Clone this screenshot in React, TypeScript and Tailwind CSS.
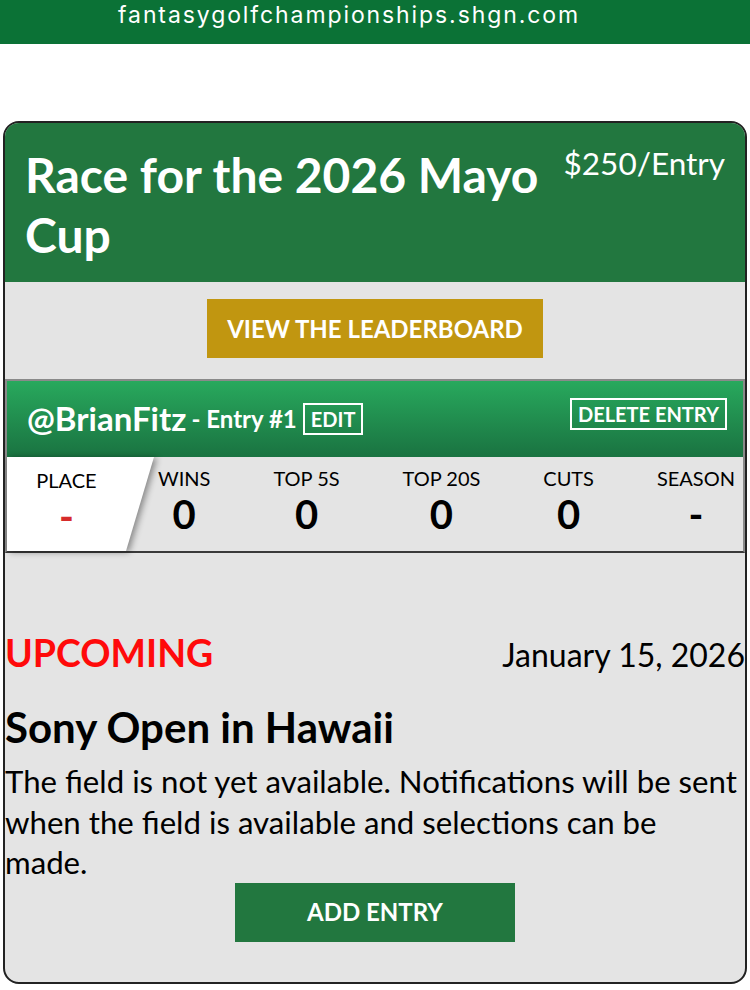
export default function App() {
  const stats = [
    { label: "WINS", value: "0" },
    { label: "TOP 5S", value: "0" },
    { label: "TOP 20S", value: "0" },
    { label: "CUTS", value: "0" },
    { label: "SEASON", value: "-" },
  ];
  return (
    <div className="min-h-[990px] bg-white font-[Lato,sans-serif] text-black">
      <div className="h-[44px] bg-[#0b7236] flex justify-center pr-[52px] text-white font-[Inter,sans-serif] text-[23px] tracking-[1.9px] leading-[30px]">
        fantasygolfchampionships.shgn.com
      </div>
      <div className="px-[3px] pt-[77px]">
        <div className="rounded-[16px] border-2 border-[#222] bg-[#e4e4e4] overflow-hidden">
          <div className="bg-[#22773f] h-[159px] flex pl-[20px] pr-[20px] pt-[22px]">
            <h1 className="flex-1 text-white font-bold text-[48px] leading-[60px]">
              Race for the 2026 Mayo Cup
            </h1>
            <div className="shrink-0 text-white text-[31.5px] leading-[36px] pt-0">$250/Entry</div>
          </div>
          <div className="h-[97px] flex justify-center pt-[17px]">
            <div className="w-[336px] h-[59px] bg-[#c19610] text-white font-bold text-[24px] flex items-center justify-center">
              VIEW THE LEADERBOARD
            </div>
          </div>
          <div className="border-2 border-[#8a8a8a] border-b-[#3a3a3a]">
            <div className="h-[76px] bg-linear-to-b from-[#28a95d] to-[#1a7341] flex justify-between pl-[20px] pr-[16px]">
              <div className="flex items-center text-white font-bold">
                <span className="text-[33px]">@BrianFitz</span>
                <span className="text-[24px] ml-[5px]">- Entry #1</span>
                <span className="ml-[6px] border-2 border-white h-[32px] px-[6px] text-[20px] leading-[28px]">EDIT</span>
              </div>
              <div className="self-start mt-[17px] border-2 border-white h-[32px] px-[6px] text-white font-bold text-[20px] leading-[28px]">
                DELETE ENTRY
              </div>
            </div>
            <div className="h-[94px] flex">
              <div className="relative w-[147px] shrink-0">
                <div className="absolute inset-0 drop-shadow-[3px_1px_3px_rgba(0,0,0,0.4)]">
                  <div className="w-full h-full bg-white [clip-path:polygon(0_0,100%_0,calc(100%-28px)_100%,0_100%)]" />
                </div>
                <div className="relative flex flex-col items-center pr-[28px] pt-[9px]">
                  <div className="text-[20px] leading-[28px]">PLACE</div>
                  <div className="text-[40px] leading-[44px] font-bold text-[#d62b2b]">-</div>
                </div>
              </div>
              <div className="flex-1 flex justify-between pl-[4px] pr-[8px] pt-[7px]">
                {stats.map((s) => (
                  <div key={s.label} className="flex flex-col items-center">
                    <div className="text-[20px] leading-[28px]">{s.label}</div>
                    <div className="text-[40px] leading-[44px] font-bold">{s.value}</div>
                  </div>
                ))}
              </div>
            </div>
          </div>
          <div className="pt-[78px] pb-[40px]">
            <div className="flex justify-between items-baseline">
              <div className="text-[#ff0a0a] font-bold text-[37.5px] leading-[44px]">UPCOMING</div>
              <div className="text-[32px] leading-[44px]">January 15, 2026</div>
            </div>
            <div className="mt-[28px] font-bold text-[42px] leading-[44px]">Sony Open in Hawaii</div>
            <p className="mt-[12px] text-[31.2px] leading-[40.5px]">
              The field is not yet available. Notifications will be sent when the field is available and selections can be made.
            </p>
            <div className="flex justify-center">
              <div className="w-[280px] h-[59px] bg-[#22773f] text-white font-bold text-[24px] flex items-center justify-center">
                ADD ENTRY
              </div>
            </div>
          </div>
        </div>
      </div>
    </div>
  );
}
